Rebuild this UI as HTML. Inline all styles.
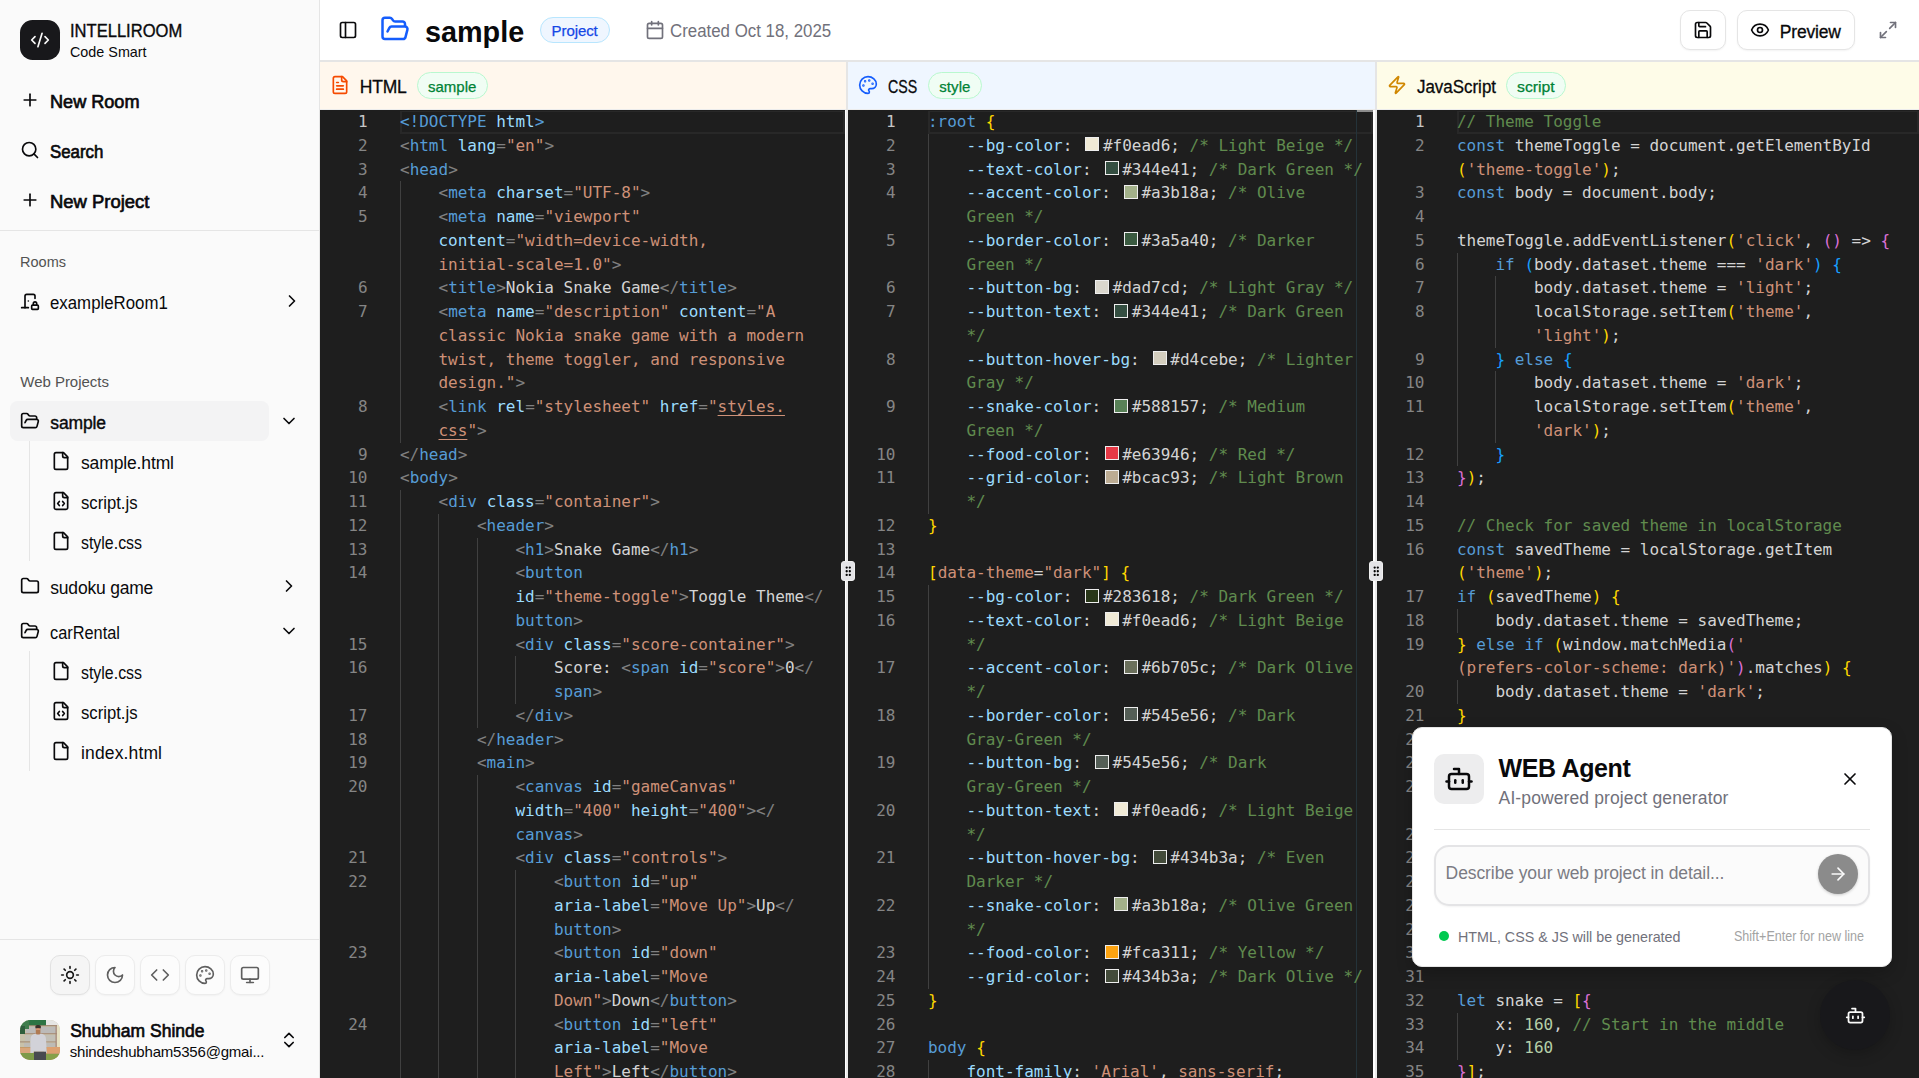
<!DOCTYPE html>
<html lang="en"><head><meta charset="utf-8"><title>sample - INTELLIROOM</title>
<style>
html,body{margin:0;padding:0}
body{width:1919px;height:1078px;overflow:hidden;background:#fff;position:relative;font-family:"Liberation Sans",sans-serif;color:#09090b}
.abs,.ic,.t{position:absolute}
.t{white-space:pre;line-height:1}
.ic{display:block;overflow:visible}
.ed{position:absolute;background:#1e1e1e;overflow:hidden;font-family:"DejaVu Sans Mono","Liberation Mono",monospace;font-size:16px;letter-spacing:-0.0112px;color:#d4d4d4}
.row{position:absolute;left:0;right:0;height:23.75px;line-height:23.75px;white-space:pre}
.ln{position:absolute;left:0;width:47.5px;text-align:right;color:#858585;top:0.12px}
.ln.a{color:#c6c6c6}
.tx{position:absolute;left:80px;top:0.12px}
.g{position:absolute;top:0;width:1px;height:23.75px;background:#404040}
.cl{position:absolute;box-sizing:border-box;border:2px solid #282828;border-top-width:1px}
.sw{display:inline-block;box-sizing:border-box;width:14px;height:14px;border:1.5px solid #eee;margin:1.75px 3.5px 0 3.5px;vertical-align:-0.5px}
.k{color:#569cd6}.d{color:#808080}.a{color:#9cdcfe}.s{color:#ce9178}.c{color:#608b4e}.n{color:#b5cea8}.b1{color:#ffd700}.b2{color:#da70d6}.b3{color:#179fff}
u{text-decoration:underline;text-underline-offset:3px}
.btn{position:absolute;box-sizing:border-box;border:1px solid #e5e5e5;border-radius:10px;background:#fff;box-shadow:0 1px 2px rgba(0,0,0,.05)}
.badge{position:absolute;box-sizing:border-box;border-radius:999px;border:1px solid}
</style></head><body>

<div class="abs" style="left:0;top:0;width:319px;height:1078px;background:#fafafa;border-right:1px solid #e5e5e5"></div>
<div class="abs" style="left:20px;top:20px;width:40px;height:40px;border-radius:12.5px;background:#18181b"></div>
<svg class="ic" style="left:30.00px;top:30.00px;width:20px;height:20px;color:#fafafa" viewBox="0 0 24 24" fill="none" stroke="currentColor" stroke-width="2" stroke-linecap="round" stroke-linejoin="round" ><path d="m18 16 4-4-4-4"/><path d="m6 8-4 4 4 4"/><path d="m14.5 4-5 16"/></svg>
<span class="t " id="t0" style="left:70.00px;top:23.00px;font-size:17.5px;color:#09090b;font-weight:400;letter-spacing:0.000px;-webkit-text-stroke:0.35px #09090b;transform:scaleX(0.9457);transform-origin:0 50%;">INTELLIROOM</span>
<span class="t " id="t1" style="left:70.00px;top:44.00px;font-size:15px;color:#09090b;font-weight:400;letter-spacing:0.000px;transform:scaleX(0.9569);transform-origin:0 50%;">Code Smart</span>
<svg class="ic" style="left:20.00px;top:90.00px;width:20px;height:20px;color:#09090b" viewBox="0 0 24 24" fill="none" stroke="currentColor" stroke-width="2" stroke-linecap="round" stroke-linejoin="round" ><path d="M5 12h14"/><path d="M12 5v14"/></svg>
<span class="t " id="t2" style="left:50.40px;top:94.00px;font-size:17.5px;color:#09090b;font-weight:400;letter-spacing:0.000px;-webkit-text-stroke:0.65px #09090b;transform:scaleX(1.0339);transform-origin:0 50%;">New Room</span>
<svg class="ic" style="left:20.00px;top:140.00px;width:20px;height:20px;color:#09090b" viewBox="0 0 24 24" fill="none" stroke="currentColor" stroke-width="2" stroke-linecap="round" stroke-linejoin="round" ><circle cx="11" cy="11" r="8"/><path d="m21 21-4.3-4.3"/></svg>
<span class="t " id="t3" style="left:50.40px;top:144.00px;font-size:17.5px;color:#09090b;font-weight:400;letter-spacing:0.000px;-webkit-text-stroke:0.65px #09090b;transform:scaleX(0.9630);transform-origin:0 50%;">Search</span>
<svg class="ic" style="left:20.00px;top:190.00px;width:20px;height:20px;color:#09090b" viewBox="0 0 24 24" fill="none" stroke="currentColor" stroke-width="2" stroke-linecap="round" stroke-linejoin="round" ><path d="M5 12h14"/><path d="M12 5v14"/></svg>
<span class="t " id="t4" style="left:50.40px;top:194.00px;font-size:17.5px;color:#09090b;font-weight:400;letter-spacing:0.000px;-webkit-text-stroke:0.65px #09090b;transform:scaleX(1.0525);transform-origin:0 50%;">New Project</span>
<div class="abs" style="left:0;top:230px;width:319px;height:1px;background:#e5e5e5"></div>
<span class="t " id="t5" style="left:20.00px;top:254.00px;font-size:15px;color:#525252;font-weight:400;letter-spacing:0.000px;transform:scaleX(0.9681);transform-origin:0 50%;">Rooms</span>
<svg class="ic" style="left:20.00px;top:291.00px;width:20px;height:20px;color:#09090b" viewBox="0 0 24 24" fill="none" stroke="currentColor" stroke-width="2" stroke-linecap="round" stroke-linejoin="round" ><path d="M10 12h.01"/><path d="M18 9V6a2 2 0 0 0-2-2H8a2 2 0 0 0-2 2v14"/><path d="M2 20h8"/><path d="M20 17v-2a2 2 0 1 0-4 0v2"/><rect x="14" y="17" width="8" height="5" rx="1"/></svg>
<span class="t " id="t6" style="left:50.20px;top:295.00px;font-size:17.5px;color:#09090b;font-weight:400;letter-spacing:0.000px;transform:scaleX(0.9611);transform-origin:0 50%;">exampleRoom1</span>
<svg class="ic" style="left:282.00px;top:291.00px;width:20px;height:20px;color:#09090b" viewBox="0 0 24 24" fill="none" stroke="currentColor" stroke-width="2" stroke-linecap="round" stroke-linejoin="round" ><path d="m9 18 6-6-6-6"/></svg>
<span class="t " id="t7" style="left:20.30px;top:374.00px;font-size:15px;color:#525252;font-weight:400;letter-spacing:-0.031px;">Web Projects</span>
<div class="abs" style="left:10px;top:401px;width:259px;height:40px;border-radius:7.5px;background:#f3f3f4"></div>
<svg class="ic" style="left:20.00px;top:411.00px;width:20px;height:20px;color:#09090b" viewBox="0 0 24 24" fill="none" stroke="currentColor" stroke-width="2" stroke-linecap="round" stroke-linejoin="round" ><path d="m6 14 1.5-2.9A2 2 0 0 1 9.24 10H20a2 2 0 0 1 1.94 2.5l-1.54 6a2 2 0 0 1-1.95 1.5H4a2 2 0 0 1-2-2V5a2 2 0 0 1 2-2h3.9a2 2 0 0 1 1.69.9l.81 1.2a2 2 0 0 0 1.67.9H18a2 2 0 0 1 2 2v2"/></svg>
<span class="t " id="t8" style="left:50.30px;top:415.00px;font-size:17.5px;color:#09090b;font-weight:400;letter-spacing:-0.144px;-webkit-text-stroke:0.4px #09090b;">sample</span>
<svg class="ic" style="left:279.00px;top:411.00px;width:20px;height:20px;color:#09090b" viewBox="0 0 24 24" fill="none" stroke="currentColor" stroke-width="2" stroke-linecap="round" stroke-linejoin="round" ><path d="m6 9 6 6 6-6"/></svg>
<div class="abs" style="left:29px;top:441px;width:1px;height:120px;background:#e5e5e5"></div>
<svg class="ic" style="left:51.00px;top:451.00px;width:20px;height:20px;color:#09090b" viewBox="0 0 24 24" fill="none" stroke="currentColor" stroke-width="2" stroke-linecap="round" stroke-linejoin="round" ><path d="M15 2H6a2 2 0 0 0-2 2v16a2 2 0 0 0 2 2h12a2 2 0 0 0 2-2V7Z"/><path d="M14 2v4a2 2 0 0 0 2 2h4"/></svg>
<span class="t " id="t9" style="left:81.00px;top:455.00px;font-size:17.5px;color:#09090b;font-weight:400;letter-spacing:-0.134px;">sample.html</span>
<svg class="ic" style="left:51.00px;top:491.00px;width:20px;height:20px;color:#09090b" viewBox="0 0 24 24" fill="none" stroke="currentColor" stroke-width="2" stroke-linecap="round" stroke-linejoin="round" ><path d="M10 12.5 8 15l2 2.5"/><path d="m14 12.5 2 2.5-2 2.5"/><path d="M14 2v4a2 2 0 0 0 2 2h4"/><path d="M15 2H6a2 2 0 0 0-2 2v16a2 2 0 0 0 2 2h12a2 2 0 0 0 2-2V7z"/></svg>
<span class="t " id="t10" style="left:81.00px;top:495.00px;font-size:17.5px;color:#09090b;font-weight:400;letter-spacing:0.000px;transform:scaleX(0.9526);transform-origin:0 50%;">script.js</span>
<svg class="ic" style="left:51.00px;top:531.00px;width:20px;height:20px;color:#09090b" viewBox="0 0 24 24" fill="none" stroke="currentColor" stroke-width="2" stroke-linecap="round" stroke-linejoin="round" ><path d="M15 2H6a2 2 0 0 0-2 2v16a2 2 0 0 0 2 2h12a2 2 0 0 0 2-2V7Z"/><path d="M14 2v4a2 2 0 0 0 2 2h4"/></svg>
<span class="t " id="t11" style="left:81.00px;top:535.00px;font-size:17.5px;color:#09090b;font-weight:400;letter-spacing:0.000px;transform:scaleX(0.9090);transform-origin:0 50%;">style.css</span>
<svg class="ic" style="left:20.00px;top:576.00px;width:20px;height:20px;color:#09090b" viewBox="0 0 24 24" fill="none" stroke="currentColor" stroke-width="2" stroke-linecap="round" stroke-linejoin="round" ><path d="M20 20a2 2 0 0 0 2-2V8a2 2 0 0 0-2-2h-7.9a2 2 0 0 1-1.69-.9L9.6 3.9A2 2 0 0 0 7.93 3H4a2 2 0 0 0-2 2v13a2 2 0 0 0 2 2Z"/></svg>
<span class="t " id="t12" style="left:50.30px;top:580.00px;font-size:17.5px;color:#09090b;font-weight:400;letter-spacing:-0.208px;">sudoku game</span>
<svg class="ic" style="left:279.00px;top:576.00px;width:20px;height:20px;color:#09090b" viewBox="0 0 24 24" fill="none" stroke="currentColor" stroke-width="2" stroke-linecap="round" stroke-linejoin="round" ><path d="m9 18 6-6-6-6"/></svg>
<svg class="ic" style="left:20.00px;top:621.00px;width:20px;height:20px;color:#09090b" viewBox="0 0 24 24" fill="none" stroke="currentColor" stroke-width="2" stroke-linecap="round" stroke-linejoin="round" ><path d="m6 14 1.5-2.9A2 2 0 0 1 9.24 10H20a2 2 0 0 1 1.94 2.5l-1.54 6a2 2 0 0 1-1.95 1.5H4a2 2 0 0 1-2-2V5a2 2 0 0 1 2-2h3.9a2 2 0 0 1 1.69.9l.81 1.2a2 2 0 0 0 1.67.9H18a2 2 0 0 1 2 2v2"/></svg>
<span class="t " id="t13" style="left:50.30px;top:625.00px;font-size:17.5px;color:#09090b;font-weight:400;letter-spacing:0.000px;transform:scaleX(0.9345);transform-origin:0 50%;">carRental</span>
<svg class="ic" style="left:279.00px;top:621.00px;width:20px;height:20px;color:#09090b" viewBox="0 0 24 24" fill="none" stroke="currentColor" stroke-width="2" stroke-linecap="round" stroke-linejoin="round" ><path d="m6 9 6 6 6-6"/></svg>
<div class="abs" style="left:29px;top:651px;width:1px;height:120px;background:#e5e5e5"></div>
<svg class="ic" style="left:51.00px;top:661.00px;width:20px;height:20px;color:#09090b" viewBox="0 0 24 24" fill="none" stroke="currentColor" stroke-width="2" stroke-linecap="round" stroke-linejoin="round" ><path d="M15 2H6a2 2 0 0 0-2 2v16a2 2 0 0 0 2 2h12a2 2 0 0 0 2-2V7Z"/><path d="M14 2v4a2 2 0 0 0 2 2h4"/></svg>
<span class="t " id="t14" style="left:81.00px;top:665.00px;font-size:17.5px;color:#09090b;font-weight:400;letter-spacing:0.000px;transform:scaleX(0.9090);transform-origin:0 50%;">style.css</span>
<svg class="ic" style="left:51.00px;top:701.00px;width:20px;height:20px;color:#09090b" viewBox="0 0 24 24" fill="none" stroke="currentColor" stroke-width="2" stroke-linecap="round" stroke-linejoin="round" ><path d="M10 12.5 8 15l2 2.5"/><path d="m14 12.5 2 2.5-2 2.5"/><path d="M14 2v4a2 2 0 0 0 2 2h4"/><path d="M15 2H6a2 2 0 0 0-2 2v16a2 2 0 0 0 2 2h12a2 2 0 0 0 2-2V7z"/></svg>
<span class="t " id="t15" style="left:81.00px;top:705.00px;font-size:17.5px;color:#09090b;font-weight:400;letter-spacing:0.000px;transform:scaleX(0.9526);transform-origin:0 50%;">script.js</span>
<svg class="ic" style="left:51.00px;top:741.00px;width:20px;height:20px;color:#09090b" viewBox="0 0 24 24" fill="none" stroke="currentColor" stroke-width="2" stroke-linecap="round" stroke-linejoin="round" ><path d="M15 2H6a2 2 0 0 0-2 2v16a2 2 0 0 0 2 2h12a2 2 0 0 0 2-2V7Z"/><path d="M14 2v4a2 2 0 0 0 2 2h4"/></svg>
<span class="t " id="t16" style="left:81.00px;top:745.00px;font-size:17.5px;color:#09090b;font-weight:400;letter-spacing:0.137px;">index.html</span>
<div class="abs" style="left:0;top:939px;width:319px;height:1px;background:#e5e5e5"></div>
<div class="abs" style="left:50px;top:955px;width:40px;height:40px;box-sizing:border-box;border:1px solid #e2e2e2;border-radius:10px;background:#f5f5f5;box-shadow:0 1px 2px rgba(0,0,0,.04)"></div>
<svg class="ic" style="left:60.00px;top:965.00px;width:20px;height:20px;color:#171717" viewBox="0 0 24 24" fill="none" stroke="currentColor" stroke-width="2" stroke-linecap="round" stroke-linejoin="round" ><circle cx="12" cy="12" r="4"/><path d="M12 2v2"/><path d="M12 20v2"/><path d="m4.93 4.93 1.41 1.41"/><path d="m17.66 17.66 1.41 1.41"/><path d="M2 12h2"/><path d="M20 12h2"/><path d="m6.34 17.66-1.41 1.41"/><path d="m19.07 4.93-1.41 1.41"/></svg>
<div class="abs" style="left:95px;top:955px;width:40px;height:40px;box-sizing:border-box;border:1px solid #ececec;border-radius:10px;background:#fcfcfc;box-shadow:0 1px 2px rgba(0,0,0,.04)"></div>
<svg class="ic" style="left:105.00px;top:965.00px;width:20px;height:20px;color:#5f5f5f" viewBox="0 0 24 24" fill="none" stroke="currentColor" stroke-width="2" stroke-linecap="round" stroke-linejoin="round" ><path d="M12 3a6 6 0 0 0 9 9 9 9 0 1 1-9-9Z"/></svg>
<div class="abs" style="left:140px;top:955px;width:40px;height:40px;box-sizing:border-box;border:1px solid #ececec;border-radius:10px;background:#fcfcfc;box-shadow:0 1px 2px rgba(0,0,0,.04)"></div>
<svg class="ic" style="left:150.00px;top:965.00px;width:20px;height:20px;color:#5f5f5f" viewBox="0 0 24 24" fill="none" stroke="currentColor" stroke-width="2" stroke-linecap="round" stroke-linejoin="round" ><polyline points="16 18 22 12 16 6"/><polyline points="8 6 2 12 8 18"/></svg>
<div class="abs" style="left:185px;top:955px;width:40px;height:40px;box-sizing:border-box;border:1px solid #ececec;border-radius:10px;background:#fcfcfc;box-shadow:0 1px 2px rgba(0,0,0,.04)"></div>
<svg class="ic" style="left:195.00px;top:965.00px;width:20px;height:20px;color:#5f5f5f" viewBox="0 0 24 24" fill="none" stroke="currentColor" stroke-width="2" stroke-linecap="round" stroke-linejoin="round" ><circle cx="13.5" cy="6.5" r=".5" fill="currentColor"/><circle cx="17.5" cy="10.5" r=".5" fill="currentColor"/><circle cx="8.5" cy="7.5" r=".5" fill="currentColor"/><circle cx="6.5" cy="12.5" r=".5" fill="currentColor"/><path d="M12 2C6.5 2 2 6.5 2 12s4.5 10 10 10c.926 0 1.648-.746 1.648-1.688 0-.437-.18-.835-.437-1.125-.29-.289-.438-.652-.438-1.125a1.64 1.64 0 0 1 1.668-1.668h1.996c3.051 0 5.555-2.503 5.555-5.554C21.965 6.012 17.461 2 12 2z"/></svg>
<div class="abs" style="left:230px;top:955px;width:40px;height:40px;box-sizing:border-box;border:1px solid #ececec;border-radius:10px;background:#fcfcfc;box-shadow:0 1px 2px rgba(0,0,0,.04)"></div>
<svg class="ic" style="left:240.00px;top:965.00px;width:20px;height:20px;color:#5f5f5f" viewBox="0 0 24 24" fill="none" stroke="currentColor" stroke-width="2" stroke-linecap="round" stroke-linejoin="round" ><rect width="20" height="14" x="2" y="3" rx="2"/><line x1="8" x2="16" y1="21" y2="21"/><line x1="12" x2="12" y1="17" y2="21"/></svg>
<svg class="ic" style="left:20px;top:1020px;width:40px;height:40px" viewBox="0 0 40 40"><defs><clipPath id="av"><rect width="40" height="40" rx="10"/></clipPath></defs><g clip-path="url(#av)"><rect width="40" height="40" fill="#c8c1aa"/><rect x="6" y="7" width="30" height="6" fill="#bcbab8"/><rect x="5" y="15" width="31" height="6" fill="#c2bfb6"/><rect x="4" y="23" width="32" height="4" fill="#bdbbb6"/><rect y="5.2" width="37" height="1" fill="#9c7f6c"/><rect x="4" y="13.2" width="33" height="1" fill="#a58876"/><rect y="21.4" width="10" height="1" fill="#a08672"/><rect x="26" y="21.4" width="10" height="1" fill="#a89080"/><rect x="35.5" y="5" width="1.2" height="24" fill="#a5877a"/><rect x="37" y="5" width="3" height="24" fill="#e6e0c2"/><rect x="26" y="0" width="14" height="5" fill="#e6e6e4"/><rect x="8" y="0" width="18" height="5.2" fill="#2d7444"/><rect x="0" y="0" width="9" height="9" fill="#3f7d4c"/><rect x="0" y="6" width="5" height="8" fill="#2f5e3c"/><rect x="0" y="27" width="40" height="13" fill="#c49a6a"/><rect x="0" y="28" width="13" height="5" fill="#d9a57a"/><rect x="27" y="27" width="13" height="6" fill="#dda070"/><rect x="0" y="33" width="14" height="7" fill="#7e9a48"/><rect x="26" y="34" width="14" height="6" fill="#86a04a"/><path d="M10.5 19c0-3 2-5 5-5.2h5.5c3 .2 5 2.200 5 5.200l.8 14h-2.800v-1.300h-10.500v1.300h-3.200z" fill="#d2d2d8"/><rect x="14" y="31.700" width="12" height="8.300" fill="#484a50"/><rect x="15.200" y="5" width="5.800" height="4" rx="2" fill="#3b302b"/><rect x="15.800" y="8" width="4.600" height="6.500" rx="1.500" fill="#b07a52"/><rect x="15.800" y="8.600" width="4.600" height="1.200" fill="#e09a80"/></g></svg>
<span class="t " id="t17" style="left:70.20px;top:1023.00px;font-size:17.5px;color:#09090b;font-weight:400;letter-spacing:0.009px;-webkit-text-stroke:0.65px #09090b;">Shubham Shinde</span>
<span class="t " id="t18" style="left:69.80px;top:1044.00px;font-size:15px;color:#09090b;font-weight:400;letter-spacing:-0.201px;">shindeshubham5356@gmai...</span>
<svg class="ic" style="left:278.80px;top:1030.00px;width:20px;height:20px;color:#09090b" viewBox="0 0 24 24" fill="none" stroke="currentColor" stroke-width="2" stroke-linecap="round" stroke-linejoin="round" ><path d="m7 15 5 5 5-5"/><path d="m7 9 5-5 5 5"/></svg>
<div class="abs" style="left:320px;top:60px;width:1599px;height:2px;background:#e5e5e5"></div>
<svg class="ic" style="left:338.20px;top:20.20px;width:20px;height:20px;color:#09090b" viewBox="0 0 24 24" fill="none" stroke="currentColor" stroke-width="2" stroke-linecap="round" stroke-linejoin="round" ><rect width="18" height="18" x="3" y="3" rx="2"/><path d="M9 3v18"/></svg>
<svg class="ic" style="left:379.90px;top:14.30px;width:30px;height:30px;color:#155dfc" viewBox="0 0 24 24" fill="none" stroke="currentColor" stroke-width="2" stroke-linecap="round" stroke-linejoin="round" ><path d="m6 14 1.5-2.9A2 2 0 0 1 9.24 10H20a2 2 0 0 1 1.94 2.5l-1.54 6a2 2 0 0 1-1.95 1.5H4a2 2 0 0 1-2-2V5a2 2 0 0 1 2-2h3.9a2 2 0 0 1 1.69.9l.81 1.2a2 2 0 0 0 1.67.9H18a2 2 0 0 1 2 2v2"/></svg>
<span class="t " id="t19" style="left:424.50px;top:17.00px;font-size:30px;color:#09090b;font-weight:700;letter-spacing:0.000px;transform:scaleX(0.9595);transform-origin:0 50%;">sample</span>
<div class="badge" style="left:540px;top:17px;width:70px;height:26px;background:#eff6ff;border-color:#b8e6fe"></div>
<span class="t " id="t20" style="left:551.60px;top:23.00px;font-size:15px;color:#1447e6;font-weight:400;letter-spacing:-0.081px;-webkit-text-stroke:0.25px #1447e6;">Project</span>
<svg class="ic" style="left:644.80px;top:20.10px;width:20px;height:20px;color:#71717b" viewBox="0 0 24 24" fill="none" stroke="currentColor" stroke-width="2" stroke-linecap="round" stroke-linejoin="round" ><path d="M8 2v4"/><path d="M16 2v4"/><rect width="18" height="18" x="3" y="4" rx="2"/><path d="M3 10h18"/></svg>
<span class="t " id="t21" style="left:669.60px;top:23.00px;font-size:17.5px;color:#71717b;font-weight:400;letter-spacing:0.000px;transform:scaleX(0.9634);transform-origin:0 50%;">Created Oct 18, 2025</span>
<div class="btn" style="left:1679.5px;top:10px;width:46px;height:40px"></div>
<svg class="ic" style="left:1693.00px;top:20.00px;width:20px;height:20px;color:#09090b" viewBox="0 0 24 24" fill="none" stroke="currentColor" stroke-width="2" stroke-linecap="round" stroke-linejoin="round" ><path d="M15.2 3a2 2 0 0 1 1.4.6l3.8 3.8a2 2 0 0 1 .6 1.4V19a2 2 0 0 1-2 2H5a2 2 0 0 1-2-2V5a2 2 0 0 1 2-2z"/><path d="M17 21v-7a1 1 0 0 0-1-1H8a1 1 0 0 0-1 1v7"/><path d="M7 3v4a1 1 0 0 0 1 1h7"/></svg>
<div class="btn" style="left:1736.5px;top:10px;width:118px;height:40px"></div>
<svg class="ic" style="left:1749.80px;top:20.00px;width:20px;height:20px;color:#09090b" viewBox="0 0 24 24" fill="none" stroke="currentColor" stroke-width="2" stroke-linecap="round" stroke-linejoin="round" ><path d="M2.062 12.348a1 1 0 0 1 0-.696 10.75 10.75 0 0 1 19.876 0 1 1 0 0 1 0 .696 10.75 10.75 0 0 1-19.876 0"/><circle cx="12" cy="12" r="3"/></svg>
<span class="t " id="t22" style="left:1779.80px;top:24.00px;font-size:17.5px;color:#09090b;font-weight:400;letter-spacing:-0.208px;-webkit-text-stroke:0.3px #09090b;">Preview</span>
<svg class="ic" style="left:1878.00px;top:20.00px;width:20px;height:20px;color:#71717b" viewBox="0 0 24 24" fill="none" stroke="currentColor" stroke-width="2" stroke-linecap="round" stroke-linejoin="round" ><polyline points="15 3 21 3 21 9"/><polyline points="9 21 3 21 3 15"/><line x1="21" x2="14" y1="3" y2="10"/><line x1="3" x2="10" y1="21" y2="14"/></svg>
<div class="abs" style="left:320px;top:62px;width:526px;height:47px;background:#fff7ed"></div>
<div class="abs" style="left:848px;top:62px;width:527px;height:47px;background:#eff6ff"></div>
<div class="abs" style="left:1377px;top:62px;width:542px;height:47px;background:#fefce8"></div>
<div class="abs" style="left:320px;top:109px;width:1599px;height:1px;background:#ececec"></div>
<svg class="ic" style="left:330.20px;top:75.00px;width:20px;height:20px;color:#f54a00" viewBox="0 0 24 24" fill="none" stroke="currentColor" stroke-width="2" stroke-linecap="round" stroke-linejoin="round" ><path d="M15 2H6a2 2 0 0 0-2 2v16a2 2 0 0 0 2 2h12a2 2 0 0 0 2-2V7Z"/><path d="M14 2v4a2 2 0 0 0 2 2h4"/><path d="M10 9H8"/><path d="M16 13H8"/><path d="M16 17H8"/></svg>
<span class="t " id="t23" style="left:359.80px;top:79.00px;font-size:17.5px;color:#09090b;font-weight:400;letter-spacing:-0.214px;-webkit-text-stroke:0.3px #09090b;">HTML</span>
<div class="badge" style="left:417px;top:72px;width:71px;height:27px;background:#f0fdf4;border-color:#b9f8cf"></div>
<span class="t " id="t24" style="left:428.00px;top:79.00px;font-size:15px;color:#008236;font-weight:400;letter-spacing:0.008px;-webkit-text-stroke:0.25px #008236;">sample</span>
<svg class="ic" style="left:858.00px;top:74.80px;width:20px;height:20px;color:#155dfc" viewBox="0 0 24 24" fill="none" stroke="currentColor" stroke-width="2" stroke-linecap="round" stroke-linejoin="round" ><circle cx="13.5" cy="6.5" r=".5" fill="currentColor"/><circle cx="17.5" cy="10.5" r=".5" fill="currentColor"/><circle cx="8.5" cy="7.5" r=".5" fill="currentColor"/><circle cx="6.5" cy="12.5" r=".5" fill="currentColor"/><path d="M12 2C6.5 2 2 6.5 2 12s4.5 10 10 10c.926 0 1.648-.746 1.648-1.688 0-.437-.18-.835-.437-1.125-.29-.289-.438-.652-.438-1.125a1.64 1.64 0 0 1 1.668-1.668h1.996c3.051 0 5.555-2.503 5.555-5.554C21.965 6.012 17.461 2 12 2z"/></svg>
<span class="t " id="t25" style="left:888.40px;top:79.00px;font-size:17.5px;color:#09090b;font-weight:400;letter-spacing:0.000px;-webkit-text-stroke:0.3px #09090b;transform:scaleX(0.8115);transform-origin:0 50%;">CSS</span>
<div class="badge" style="left:928px;top:72px;width:54px;height:27px;background:#f0fdf4;border-color:#b9f8cf"></div>
<span class="t " id="t26" style="left:939.20px;top:79.00px;font-size:15px;color:#008236;font-weight:400;letter-spacing:0.102px;-webkit-text-stroke:0.25px #008236;">style</span>
<svg class="ic" style="left:1387.00px;top:74.80px;width:20px;height:20px;color:#d08700" viewBox="0 0 24 24" fill="none" stroke="currentColor" stroke-width="2" stroke-linecap="round" stroke-linejoin="round" ><path d="M4 14a1 1 0 0 1-.78-1.63l9.9-10.2a.5.5 0 0 1 .86.46l-1.92 6.02A1 1 0 0 0 13 10h7a1 1 0 0 1 .78 1.63l-9.9 10.2a.5.5 0 0 1-.86-.46l1.92-6.02A1 1 0 0 0 11 14z"/></svg>
<span class="t " id="t27" style="left:1416.60px;top:79.00px;font-size:17.5px;color:#09090b;font-weight:400;letter-spacing:0.000px;-webkit-text-stroke:0.3px #09090b;transform:scaleX(0.9669);transform-origin:0 50%;">JavaScript</span>
<div class="badge" style="left:1506px;top:72px;width:60px;height:27px;background:#f0fdf4;border-color:#b9f8cf"></div>
<span class="t " id="t28" style="left:1516.80px;top:79.00px;font-size:15px;color:#008236;font-weight:400;letter-spacing:0.000px;-webkit-text-stroke:0.25px #008236;transform:scaleX(1.0532);transform-origin:0 50%;">script</span>
<div class="ed" style="left:320px;top:110px;width:524.8px;height:968px">
<div class="cl" style="left:80px;top:1px;width:444.8px;height:23px"></div>
<div class="row" style="top:0.00px"><span class="ln a">1</span><span class="tx"><span class="k">&lt;!DOCTYPE</span><span class="a"> html</span><span class="k">&gt;</span></span></div>
<div class="row" style="top:23.75px"><span class="ln">2</span><span class="tx"><span class="d">&lt;</span><span class="k">html</span> <span class="a">lang</span><span class="d">=</span><span class="s">"en"</span><span class="d">&gt;</span></span></div>
<div class="row" style="top:47.50px"><span class="ln">3</span><span class="tx"><span class="d">&lt;</span><span class="k">head</span><span class="d">&gt;</span></span></div>
<div class="row" style="top:71.25px"><span class="ln">4</span><i class="g" style="left:80.00px"></i><span class="tx">    <span class="d">&lt;</span><span class="k">meta</span> <span class="a">charset</span><span class="d">=</span><span class="s">"UTF-8"</span><span class="d">&gt;</span></span></div>
<div class="row" style="top:95.00px"><span class="ln">5</span><i class="g" style="left:80.00px"></i><span class="tx">    <span class="d">&lt;</span><span class="k">meta</span> <span class="a">name</span><span class="d">=</span><span class="s">"viewport"</span> </span></div>
<div class="row" style="top:118.75px"><i class="g" style="left:80.00px"></i><span class="tx">    <span class="a">content</span><span class="d">=</span><span class="s">"width=device-width, </span></span></div>
<div class="row" style="top:142.50px"><i class="g" style="left:80.00px"></i><span class="tx">    <span class="s">initial-scale=1.0"</span><span class="d">&gt;</span></span></div>
<div class="row" style="top:166.25px"><span class="ln">6</span><i class="g" style="left:80.00px"></i><span class="tx">    <span class="d">&lt;</span><span class="k">title</span><span class="d">&gt;</span>Nokia Snake Game<span class="d">&lt;/</span><span class="k">title</span><span class="d">&gt;</span></span></div>
<div class="row" style="top:190.00px"><span class="ln">7</span><i class="g" style="left:80.00px"></i><span class="tx">    <span class="d">&lt;</span><span class="k">meta</span> <span class="a">name</span><span class="d">=</span><span class="s">"description"</span> <span class="a">content</span><span class="d">=</span><span class="s">"A </span></span></div>
<div class="row" style="top:213.75px"><i class="g" style="left:80.00px"></i><span class="tx">    <span class="s">classic Nokia snake game with a modern </span></span></div>
<div class="row" style="top:237.50px"><i class="g" style="left:80.00px"></i><span class="tx">    <span class="s">twist, theme toggler, and responsive </span></span></div>
<div class="row" style="top:261.25px"><i class="g" style="left:80.00px"></i><span class="tx">    <span class="s">design."</span><span class="d">&gt;</span></span></div>
<div class="row" style="top:285.00px"><span class="ln">8</span><i class="g" style="left:80.00px"></i><span class="tx">    <span class="d">&lt;</span><span class="k">link</span> <span class="a">rel</span><span class="d">=</span><span class="s">"stylesheet"</span> <span class="a">href</span><span class="d">=</span><span class="s">"<u>styles.</u></span></span></div>
<div class="row" style="top:308.75px"><i class="g" style="left:80.00px"></i><span class="tx">    <span class="s"><u>css</u>"</span><span class="d">&gt;</span></span></div>
<div class="row" style="top:332.50px"><span class="ln">9</span><span class="tx"><span class="d">&lt;/</span><span class="k">head</span><span class="d">&gt;</span></span></div>
<div class="row" style="top:356.25px"><span class="ln">10</span><span class="tx"><span class="d">&lt;</span><span class="k">body</span><span class="d">&gt;</span></span></div>
<div class="row" style="top:380.00px"><span class="ln">11</span><i class="g" style="left:80.00px"></i><span class="tx">    <span class="d">&lt;</span><span class="k">div</span> <span class="a">class</span><span class="d">=</span><span class="s">"container"</span><span class="d">&gt;</span></span></div>
<div class="row" style="top:403.75px"><span class="ln">12</span><i class="g" style="left:80.00px"></i><i class="g" style="left:118.49px"></i><span class="tx">        <span class="d">&lt;</span><span class="k">header</span><span class="d">&gt;</span></span></div>
<div class="row" style="top:427.50px"><span class="ln">13</span><i class="g" style="left:80.00px"></i><i class="g" style="left:118.49px"></i><i class="g" style="left:156.97px"></i><span class="tx">            <span class="d">&lt;</span><span class="k">h1</span><span class="d">&gt;</span>Snake Game<span class="d">&lt;/</span><span class="k">h1</span><span class="d">&gt;</span></span></div>
<div class="row" style="top:451.25px"><span class="ln">14</span><i class="g" style="left:80.00px"></i><i class="g" style="left:118.49px"></i><i class="g" style="left:156.97px"></i><span class="tx">            <span class="d">&lt;</span><span class="k">button</span> </span></div>
<div class="row" style="top:475.00px"><i class="g" style="left:80.00px"></i><i class="g" style="left:118.49px"></i><i class="g" style="left:156.97px"></i><span class="tx">            <span class="a">id</span><span class="d">=</span><span class="s">"theme-toggle"</span><span class="d">&gt;</span>Toggle Theme<span class="d">&lt;/</span></span></div>
<div class="row" style="top:498.75px"><i class="g" style="left:80.00px"></i><i class="g" style="left:118.49px"></i><i class="g" style="left:156.97px"></i><span class="tx">            <span class="k">button</span><span class="d">&gt;</span></span></div>
<div class="row" style="top:522.50px"><span class="ln">15</span><i class="g" style="left:80.00px"></i><i class="g" style="left:118.49px"></i><i class="g" style="left:156.97px"></i><span class="tx">            <span class="d">&lt;</span><span class="k">div</span> <span class="a">class</span><span class="d">=</span><span class="s">"score-container"</span><span class="d">&gt;</span></span></div>
<div class="row" style="top:546.25px"><span class="ln">16</span><i class="g" style="left:80.00px"></i><i class="g" style="left:118.49px"></i><i class="g" style="left:156.97px"></i><i class="g" style="left:195.46px"></i><span class="tx">                Score: <span class="d">&lt;</span><span class="k">span</span> <span class="a">id</span><span class="d">=</span><span class="s">"score"</span><span class="d">&gt;</span>0<span class="d">&lt;/</span></span></div>
<div class="row" style="top:570.00px"><i class="g" style="left:80.00px"></i><i class="g" style="left:118.49px"></i><i class="g" style="left:156.97px"></i><i class="g" style="left:195.46px"></i><span class="tx">                <span class="k">span</span><span class="d">&gt;</span></span></div>
<div class="row" style="top:593.75px"><span class="ln">17</span><i class="g" style="left:80.00px"></i><i class="g" style="left:118.49px"></i><i class="g" style="left:156.97px"></i><span class="tx">            <span class="d">&lt;/</span><span class="k">div</span><span class="d">&gt;</span></span></div>
<div class="row" style="top:617.50px"><span class="ln">18</span><i class="g" style="left:80.00px"></i><i class="g" style="left:118.49px"></i><span class="tx">        <span class="d">&lt;/</span><span class="k">header</span><span class="d">&gt;</span></span></div>
<div class="row" style="top:641.25px"><span class="ln">19</span><i class="g" style="left:80.00px"></i><i class="g" style="left:118.49px"></i><span class="tx">        <span class="d">&lt;</span><span class="k">main</span><span class="d">&gt;</span></span></div>
<div class="row" style="top:665.00px"><span class="ln">20</span><i class="g" style="left:80.00px"></i><i class="g" style="left:118.49px"></i><i class="g" style="left:156.97px"></i><span class="tx">            <span class="d">&lt;</span><span class="k">canvas</span> <span class="a">id</span><span class="d">=</span><span class="s">"gameCanvas"</span> </span></div>
<div class="row" style="top:688.75px"><i class="g" style="left:80.00px"></i><i class="g" style="left:118.49px"></i><i class="g" style="left:156.97px"></i><span class="tx">            <span class="a">width</span><span class="d">=</span><span class="s">"400"</span> <span class="a">height</span><span class="d">=</span><span class="s">"400"</span><span class="d">&gt;&lt;/</span></span></div>
<div class="row" style="top:712.50px"><i class="g" style="left:80.00px"></i><i class="g" style="left:118.49px"></i><i class="g" style="left:156.97px"></i><span class="tx">            <span class="k">canvas</span><span class="d">&gt;</span></span></div>
<div class="row" style="top:736.25px"><span class="ln">21</span><i class="g" style="left:80.00px"></i><i class="g" style="left:118.49px"></i><i class="g" style="left:156.97px"></i><span class="tx">            <span class="d">&lt;</span><span class="k">div</span> <span class="a">class</span><span class="d">=</span><span class="s">"controls"</span><span class="d">&gt;</span></span></div>
<div class="row" style="top:760.00px"><span class="ln">22</span><i class="g" style="left:80.00px"></i><i class="g" style="left:118.49px"></i><i class="g" style="left:156.97px"></i><i class="g" style="left:195.46px"></i><span class="tx">                <span class="d">&lt;</span><span class="k">button</span> <span class="a">id</span><span class="d">=</span><span class="s">"up"</span> </span></div>
<div class="row" style="top:783.75px"><i class="g" style="left:80.00px"></i><i class="g" style="left:118.49px"></i><i class="g" style="left:156.97px"></i><i class="g" style="left:195.46px"></i><span class="tx">                <span class="a">aria-label</span><span class="d">=</span><span class="s">"Move Up"</span><span class="d">&gt;</span>Up<span class="d">&lt;/</span></span></div>
<div class="row" style="top:807.50px"><i class="g" style="left:80.00px"></i><i class="g" style="left:118.49px"></i><i class="g" style="left:156.97px"></i><i class="g" style="left:195.46px"></i><span class="tx">                <span class="k">button</span><span class="d">&gt;</span></span></div>
<div class="row" style="top:831.25px"><span class="ln">23</span><i class="g" style="left:80.00px"></i><i class="g" style="left:118.49px"></i><i class="g" style="left:156.97px"></i><i class="g" style="left:195.46px"></i><span class="tx">                <span class="d">&lt;</span><span class="k">button</span> <span class="a">id</span><span class="d">=</span><span class="s">"down"</span> </span></div>
<div class="row" style="top:855.00px"><i class="g" style="left:80.00px"></i><i class="g" style="left:118.49px"></i><i class="g" style="left:156.97px"></i><i class="g" style="left:195.46px"></i><span class="tx">                <span class="a">aria-label</span><span class="d">=</span><span class="s">"Move </span></span></div>
<div class="row" style="top:878.75px"><i class="g" style="left:80.00px"></i><i class="g" style="left:118.49px"></i><i class="g" style="left:156.97px"></i><i class="g" style="left:195.46px"></i><span class="tx">                <span class="s">Down"</span><span class="d">&gt;</span>Down<span class="d">&lt;/</span><span class="k">button</span><span class="d">&gt;</span></span></div>
<div class="row" style="top:902.50px"><span class="ln">24</span><i class="g" style="left:80.00px"></i><i class="g" style="left:118.49px"></i><i class="g" style="left:156.97px"></i><i class="g" style="left:195.46px"></i><span class="tx">                <span class="d">&lt;</span><span class="k">button</span> <span class="a">id</span><span class="d">=</span><span class="s">"left"</span> </span></div>
<div class="row" style="top:926.25px"><i class="g" style="left:80.00px"></i><i class="g" style="left:118.49px"></i><i class="g" style="left:156.97px"></i><i class="g" style="left:195.46px"></i><span class="tx">                <span class="a">aria-label</span><span class="d">=</span><span class="s">"Move </span></span></div>
<div class="row" style="top:950.00px"><i class="g" style="left:80.00px"></i><i class="g" style="left:118.49px"></i><i class="g" style="left:156.97px"></i><i class="g" style="left:195.46px"></i><span class="tx">                <span class="s">Left"</span><span class="d">&gt;</span>Left<span class="d">&lt;/</span><span class="k">button</span><span class="d">&gt;</span></span></div>
</div>
<div class="ed" style="left:848px;top:110px;width:524.7px;height:968px">
<div class="cl" style="left:80px;top:1px;width:444.7px;height:23px"></div>
<div style="position:absolute;left:508.2px;top:0;width:1px;height:100%;background:#24333a"></div>
<div style="position:absolute;left:509.0px;top:0;width:15.7px;height:2px;background:#8c8c8c"></div>
<div class="row" style="top:0.00px"><span class="ln a">1</span><span class="tx"><span class="k">:root</span> <span class="b1">{</span></span></div>
<div class="row" style="top:23.75px"><span class="ln">2</span><i class="g" style="left:80.00px"></i><span class="tx">    <span class="a">--bg-color</span>: <b class="sw" style="background:#f0ead6"></b>#f0ead6; <span class="c">/* Light Beige */</span></span></div>
<div class="row" style="top:47.50px"><span class="ln">3</span><i class="g" style="left:80.00px"></i><span class="tx">    <span class="a">--text-color</span>: <b class="sw" style="background:#344e41"></b>#344e41; <span class="c">/* Dark Green */</span></span></div>
<div class="row" style="top:71.25px"><span class="ln">4</span><i class="g" style="left:80.00px"></i><span class="tx">    <span class="a">--accent-color</span>: <b class="sw" style="background:#a3b18a"></b>#a3b18a; <span class="c">/* Olive </span></span></div>
<div class="row" style="top:95.00px"><i class="g" style="left:80.00px"></i><span class="tx">    <span class="c">Green */</span></span></div>
<div class="row" style="top:118.75px"><span class="ln">5</span><i class="g" style="left:80.00px"></i><span class="tx">    <span class="a">--border-color</span>: <b class="sw" style="background:#3a5a40"></b>#3a5a40; <span class="c">/* Darker </span></span></div>
<div class="row" style="top:142.50px"><i class="g" style="left:80.00px"></i><span class="tx">    <span class="c">Green */</span></span></div>
<div class="row" style="top:166.25px"><span class="ln">6</span><i class="g" style="left:80.00px"></i><span class="tx">    <span class="a">--button-bg</span>: <b class="sw" style="background:#dad7cd"></b>#dad7cd; <span class="c">/* Light Gray */</span></span></div>
<div class="row" style="top:190.00px"><span class="ln">7</span><i class="g" style="left:80.00px"></i><span class="tx">    <span class="a">--button-text</span>: <b class="sw" style="background:#344e41"></b>#344e41; <span class="c">/* Dark Green </span></span></div>
<div class="row" style="top:213.75px"><i class="g" style="left:80.00px"></i><span class="tx">    <span class="c">*/</span></span></div>
<div class="row" style="top:237.50px"><span class="ln">8</span><i class="g" style="left:80.00px"></i><span class="tx">    <span class="a">--button-hover-bg</span>: <b class="sw" style="background:#d4cebe"></b>#d4cebe; <span class="c">/* Lighter </span></span></div>
<div class="row" style="top:261.25px"><i class="g" style="left:80.00px"></i><span class="tx">    <span class="c">Gray */</span></span></div>
<div class="row" style="top:285.00px"><span class="ln">9</span><i class="g" style="left:80.00px"></i><span class="tx">    <span class="a">--snake-color</span>: <b class="sw" style="background:#588157"></b>#588157; <span class="c">/* Medium </span></span></div>
<div class="row" style="top:308.75px"><i class="g" style="left:80.00px"></i><span class="tx">    <span class="c">Green */</span></span></div>
<div class="row" style="top:332.50px"><span class="ln">10</span><i class="g" style="left:80.00px"></i><span class="tx">    <span class="a">--food-color</span>: <b class="sw" style="background:#e63946"></b>#e63946; <span class="c">/* Red */</span></span></div>
<div class="row" style="top:356.25px"><span class="ln">11</span><i class="g" style="left:80.00px"></i><span class="tx">    <span class="a">--grid-color</span>: <b class="sw" style="background:#bcac93"></b>#bcac93; <span class="c">/* Light Brown </span></span></div>
<div class="row" style="top:380.00px"><i class="g" style="left:80.00px"></i><span class="tx">    <span class="c">*/</span></span></div>
<div class="row" style="top:403.75px"><span class="ln">12</span><span class="tx"><span class="b1">}</span></span></div>
<div class="row" style="top:427.50px"><span class="ln">13</span><span class="tx"></span></div>
<div class="row" style="top:451.25px"><span class="ln">14</span><span class="tx"><span class="b1">[</span><span class="s">data-theme</span>=<span class="s">"dark"</span><span class="b1">]</span> <span class="b1">{</span></span></div>
<div class="row" style="top:475.00px"><span class="ln">15</span><i class="g" style="left:80.00px"></i><span class="tx">    <span class="a">--bg-color</span>: <b class="sw" style="background:#283618"></b>#283618; <span class="c">/* Dark Green */</span></span></div>
<div class="row" style="top:498.75px"><span class="ln">16</span><i class="g" style="left:80.00px"></i><span class="tx">    <span class="a">--text-color</span>: <b class="sw" style="background:#f0ead6"></b>#f0ead6; <span class="c">/* Light Beige </span></span></div>
<div class="row" style="top:522.50px"><i class="g" style="left:80.00px"></i><span class="tx">    <span class="c">*/</span></span></div>
<div class="row" style="top:546.25px"><span class="ln">17</span><i class="g" style="left:80.00px"></i><span class="tx">    <span class="a">--accent-color</span>: <b class="sw" style="background:#6b705c"></b>#6b705c; <span class="c">/* Dark Olive </span></span></div>
<div class="row" style="top:570.00px"><i class="g" style="left:80.00px"></i><span class="tx">    <span class="c">*/</span></span></div>
<div class="row" style="top:593.75px"><span class="ln">18</span><i class="g" style="left:80.00px"></i><span class="tx">    <span class="a">--border-color</span>: <b class="sw" style="background:#545e56"></b>#545e56; <span class="c">/* Dark </span></span></div>
<div class="row" style="top:617.50px"><i class="g" style="left:80.00px"></i><span class="tx">    <span class="c">Gray-Green */</span></span></div>
<div class="row" style="top:641.25px"><span class="ln">19</span><i class="g" style="left:80.00px"></i><span class="tx">    <span class="a">--button-bg</span>: <b class="sw" style="background:#545e56"></b>#545e56; <span class="c">/* Dark </span></span></div>
<div class="row" style="top:665.00px"><i class="g" style="left:80.00px"></i><span class="tx">    <span class="c">Gray-Green */</span></span></div>
<div class="row" style="top:688.75px"><span class="ln">20</span><i class="g" style="left:80.00px"></i><span class="tx">    <span class="a">--button-text</span>: <b class="sw" style="background:#f0ead6"></b>#f0ead6; <span class="c">/* Light Beige </span></span></div>
<div class="row" style="top:712.50px"><i class="g" style="left:80.00px"></i><span class="tx">    <span class="c">*/</span></span></div>
<div class="row" style="top:736.25px"><span class="ln">21</span><i class="g" style="left:80.00px"></i><span class="tx">    <span class="a">--button-hover-bg</span>: <b class="sw" style="background:#434b3a"></b>#434b3a; <span class="c">/* Even </span></span></div>
<div class="row" style="top:760.00px"><i class="g" style="left:80.00px"></i><span class="tx">    <span class="c">Darker */</span></span></div>
<div class="row" style="top:783.75px"><span class="ln">22</span><i class="g" style="left:80.00px"></i><span class="tx">    <span class="a">--snake-color</span>: <b class="sw" style="background:#a3b18a"></b>#a3b18a; <span class="c">/* Olive Green </span></span></div>
<div class="row" style="top:807.50px"><i class="g" style="left:80.00px"></i><span class="tx">    <span class="c">*/</span></span></div>
<div class="row" style="top:831.25px"><span class="ln">23</span><i class="g" style="left:80.00px"></i><span class="tx">    <span class="a">--food-color</span>: <b class="sw" style="background:#fca311"></b>#fca311; <span class="c">/* Yellow */</span></span></div>
<div class="row" style="top:855.00px"><span class="ln">24</span><i class="g" style="left:80.00px"></i><span class="tx">    <span class="a">--grid-color</span>: <b class="sw" style="background:#434b3a"></b>#434b3a; <span class="c">/* Dark Olive */</span></span></div>
<div class="row" style="top:878.75px"><span class="ln">25</span><span class="tx"><span class="b1">}</span></span></div>
<div class="row" style="top:902.50px"><span class="ln">26</span><span class="tx"></span></div>
<div class="row" style="top:926.25px"><span class="ln">27</span><span class="tx"><span class="k">body</span> <span class="b1">{</span></span></div>
<div class="row" style="top:950.00px"><span class="ln">28</span><i class="g" style="left:80.00px"></i><span class="tx">    <span class="a">font-family</span>: <span class="s">'Arial'</span>, <span class="s">sans-serif</span>;</span></div>
</div>
<div class="ed" style="left:1377px;top:110px;width:542px;height:968px">
<div class="cl" style="left:80px;top:1px;width:462.0px;height:23px"></div>
<div class="row" style="top:0.00px"><span class="ln a">1</span><span class="tx"><span class="c">// Theme Toggle</span></span></div>
<div class="row" style="top:23.75px"><span class="ln">2</span><span class="tx"><span class="k">const</span> themeToggle = document.getElementById</span></div>
<div class="row" style="top:47.50px"><span class="tx"><span class="b1">(</span><span class="s">'theme-toggle'</span><span class="b1">)</span>;</span></div>
<div class="row" style="top:71.25px"><span class="ln">3</span><span class="tx"><span class="k">const</span> body = document.body;</span></div>
<div class="row" style="top:95.00px"><span class="ln">4</span><span class="tx"></span></div>
<div class="row" style="top:118.75px"><span class="ln">5</span><span class="tx">themeToggle.addEventListener<span class="b1">(</span><span class="s">'click'</span>, <span class="b2">()</span> =&gt; <span class="b2">{</span></span></div>
<div class="row" style="top:142.50px"><span class="ln">6</span><i class="g" style="left:80.00px"></i><span class="tx">    <span class="k">if</span> <span class="b3">(</span>body.dataset.theme === <span class="s">'dark'</span><span class="b3">)</span> <span class="b3">{</span></span></div>
<div class="row" style="top:166.25px"><span class="ln">7</span><i class="g" style="left:80.00px"></i><i class="g" style="left:118.49px"></i><span class="tx">        body.dataset.theme = <span class="s">'light'</span>;</span></div>
<div class="row" style="top:190.00px"><span class="ln">8</span><i class="g" style="left:80.00px"></i><i class="g" style="left:118.49px"></i><span class="tx">        localStorage.setItem<span class="b1">(</span><span class="s">'theme'</span>, </span></div>
<div class="row" style="top:213.75px"><i class="g" style="left:80.00px"></i><i class="g" style="left:118.49px"></i><span class="tx">        <span class="s">'light'</span><span class="b1">)</span>;</span></div>
<div class="row" style="top:237.50px"><span class="ln">9</span><i class="g" style="left:80.00px"></i><span class="tx">    <span class="b3">}</span> <span class="k">else</span> <span class="b3">{</span></span></div>
<div class="row" style="top:261.25px"><span class="ln">10</span><i class="g" style="left:80.00px"></i><i class="g" style="left:118.49px"></i><span class="tx">        body.dataset.theme = <span class="s">'dark'</span>;</span></div>
<div class="row" style="top:285.00px"><span class="ln">11</span><i class="g" style="left:80.00px"></i><i class="g" style="left:118.49px"></i><span class="tx">        localStorage.setItem<span class="b1">(</span><span class="s">'theme'</span>, </span></div>
<div class="row" style="top:308.75px"><i class="g" style="left:80.00px"></i><i class="g" style="left:118.49px"></i><span class="tx">        <span class="s">'dark'</span><span class="b1">)</span>;</span></div>
<div class="row" style="top:332.50px"><span class="ln">12</span><i class="g" style="left:80.00px"></i><span class="tx">    <span class="b3">}</span></span></div>
<div class="row" style="top:356.25px"><span class="ln">13</span><span class="tx"><span class="b2">}</span><span class="b1">)</span>;</span></div>
<div class="row" style="top:380.00px"><span class="ln">14</span><span class="tx"></span></div>
<div class="row" style="top:403.75px"><span class="ln">15</span><span class="tx"><span class="c">// Check for saved theme in localStorage</span></span></div>
<div class="row" style="top:427.50px"><span class="ln">16</span><span class="tx"><span class="k">const</span> savedTheme = localStorage.getItem</span></div>
<div class="row" style="top:451.25px"><span class="tx"><span class="b1">(</span><span class="s">'theme'</span><span class="b1">)</span>;</span></div>
<div class="row" style="top:475.00px"><span class="ln">17</span><span class="tx"><span class="k">if</span> <span class="b1">(</span>savedTheme<span class="b1">)</span> <span class="b1">{</span></span></div>
<div class="row" style="top:498.75px"><span class="ln">18</span><i class="g" style="left:80.00px"></i><span class="tx">    body.dataset.theme = savedTheme;</span></div>
<div class="row" style="top:522.50px"><span class="ln">19</span><span class="tx"><span class="b1">}</span> <span class="k">else</span> <span class="k">if</span> <span class="b1">(</span>window.matchMedia<span class="b2">(</span><span class="s">'</span></span></div>
<div class="row" style="top:546.25px"><span class="tx"><span class="s">(prefers-color-scheme: dark)'</span><span class="b2">)</span>.matches<span class="b1">)</span> <span class="b1">{</span></span></div>
<div class="row" style="top:570.00px"><span class="ln">20</span><i class="g" style="left:80.00px"></i><span class="tx">    body.dataset.theme = <span class="s">'dark'</span>;</span></div>
<div class="row" style="top:593.75px"><span class="ln">21</span><span class="tx"><span class="b1">}</span></span></div>
<div class="row" style="top:617.50px"><span class="ln">22</span><span class="tx"></span></div>
<div class="row" style="top:641.25px"><span class="ln">23</span><span class="tx"><span class="c">// Game Logic</span></span></div>
<div class="row" style="top:665.00px"><span class="ln">24</span><span class="tx"><span class="k">const</span> canvas = document.getElementById</span></div>
<div class="row" style="top:688.75px"><span class="tx"><span class="b1">(</span><span class="s">'gameCanvas'</span><span class="b1">)</span>;</span></div>
<div class="row" style="top:712.50px"><span class="ln">25</span><span class="tx"><span class="k">const</span> ctx = canvas.getContext<span class="b1">(</span><span class="s">'2d'</span><span class="b1">)</span>;</span></div>
<div class="row" style="top:736.25px"><span class="ln">26</span><span class="tx"><span class="k">const</span> scoreElement = score;</span></div>
<div class="row" style="top:760.00px"><span class="ln">27</span><span class="tx"></span></div>
<div class="row" style="top:783.75px"><span class="ln">28</span><span class="tx"><span class="k">const</span> gridSize = <span class="n">20</span>;</span></div>
<div class="row" style="top:807.50px"><span class="ln">29</span><span class="tx"><span class="k">const</span> tileCount = <span class="n">20</span>;</span></div>
<div class="row" style="top:831.25px"><span class="ln">30</span><span class="tx"><span class="k">let</span> score = <span class="n">0</span>;</span></div>
<div class="row" style="top:855.00px"><span class="ln">31</span><span class="tx"></span></div>
<div class="row" style="top:878.75px"><span class="ln">32</span><span class="tx"><span class="k">let</span> snake = <span class="b1">[</span><span class="b2">{</span></span></div>
<div class="row" style="top:902.50px"><span class="ln">33</span><i class="g" style="left:80.00px"></i><span class="tx">    x: <span class="n">160</span>, <span class="c">// Start in the middle</span></span></div>
<div class="row" style="top:926.25px"><span class="ln">34</span><i class="g" style="left:80.00px"></i><span class="tx">    y: <span class="n">160</span></span></div>
<div class="row" style="top:950.00px"><span class="ln">35</span><span class="tx"><span class="b2">}</span><span class="b1">]</span>;</span></div>
</div>
<div class="abs" style="left:846px;top:62px;width:2px;height:1016px;background:#e5e5e5"></div>
<div class="abs" style="left:846px;top:110px;width:2px;height:968px;background:#ebebeb"></div>
<div class="abs" style="left:841px;top:561px;width:14px;height:20px;box-sizing:border-box;border:1px solid #efefef;border-radius:3px;background:#e4e4e7"></div>
<svg class="ic" style="left:841.75px;top:564.75px;width:12.5px;height:12.5px;color:#000" viewBox="0 0 24 24" fill="none" stroke="currentColor" stroke-width="2.4" stroke-linecap="round" stroke-linejoin="round" ><circle cx="9" cy="12" r="1"/><circle cx="9" cy="5" r="1"/><circle cx="9" cy="19" r="1"/><circle cx="15" cy="12" r="1"/><circle cx="15" cy="5" r="1"/><circle cx="15" cy="19" r="1"/></svg>
<div class="abs" style="left:1375px;top:62px;width:2px;height:1016px;background:#e5e5e5"></div>
<div class="abs" style="left:1375px;top:110px;width:2px;height:968px;background:#ebebeb"></div>
<div class="abs" style="left:1369px;top:561px;width:14px;height:20px;box-sizing:border-box;border:1px solid #efefef;border-radius:3px;background:#e4e4e7"></div>
<svg class="ic" style="left:1369.75px;top:564.75px;width:12.5px;height:12.5px;color:#000" viewBox="0 0 24 24" fill="none" stroke="currentColor" stroke-width="2.4" stroke-linecap="round" stroke-linejoin="round" ><circle cx="9" cy="12" r="1"/><circle cx="9" cy="5" r="1"/><circle cx="9" cy="19" r="1"/><circle cx="15" cy="12" r="1"/><circle cx="15" cy="5" r="1"/><circle cx="15" cy="19" r="1"/></svg>
<div class="abs" style="left:1412px;top:727px;width:480px;height:240px;box-sizing:border-box;border-radius:10px;background:#fff;border:1px solid #e5e5e5;box-shadow:0 6px 16px rgba(0,0,0,.22)"></div>
<div class="abs" style="left:1434px;top:754px;width:50px;height:50px;border-radius:10px;background:#ededee"></div>
<svg class="ic" style="left:1444.00px;top:764.00px;width:30px;height:30px;color:#09090b" viewBox="0 0 24 24" fill="none" stroke="currentColor" stroke-width="2" stroke-linecap="round" stroke-linejoin="round" ><path d="M12 8V4H8"/><rect width="16" height="12" x="4" y="8" rx="2"/><path d="M2 14h2"/><path d="M20 14h2"/><path d="M15 13v2"/><path d="M9 13v2"/></svg>
<span class="t " id="t29" style="left:1498.60px;top:756.00px;font-size:25px;color:#09090b;font-weight:700;letter-spacing:-0.371px;">WEB Agent</span>
<span class="t " id="t30" style="left:1498.60px;top:790.00px;font-size:17.5px;color:#71717b;font-weight:400;letter-spacing:0.113px;">AI-powered project generator</span>
<svg class="ic" style="left:1840.00px;top:769.00px;width:20px;height:20px;color:#09090b" viewBox="0 0 24 24" fill="none" stroke="currentColor" stroke-width="2" stroke-linecap="round" stroke-linejoin="round" ><path d="M18 6 6 18"/><path d="m6 6 12 12"/></svg>
<div class="abs" style="left:1434px;top:829px;width:436px;height:1px;background:#e5e5e5"></div>
<div class="abs" style="left:1434px;top:845px;width:436px;height:61px;box-sizing:border-box;border:2px solid #e4e4e6;border-radius:15px;background:#fbfbfb;box-shadow:0 1px 2px rgba(0,0,0,.05)"></div>
<span class="t " id="t31" style="left:1445.60px;top:865.00px;font-size:17.5px;color:#7b7b83;font-weight:400;letter-spacing:-0.090px;">Describe your web project in detail...</span>
<div class="abs" style="left:1818px;top:854px;width:40px;height:40px;border-radius:50%;background:#8b8b8b;box-shadow:0 1px 3px rgba(0,0,0,.2)"></div>
<svg class="ic" style="left:1828.00px;top:864.00px;width:20px;height:20px;color:#fafafa" viewBox="0 0 24 24" fill="none" stroke="currentColor" stroke-width="2" stroke-linecap="round" stroke-linejoin="round" ><path d="M5 12h14"/><path d="m12 5 7 7-7 7"/></svg>
<div class="abs" style="left:1439px;top:931px;width:10px;height:10px;border-radius:50%;background:#00c950"></div>
<span class="t " id="t32" style="left:1458.20px;top:929.00px;font-size:15px;color:#71717b;font-weight:400;letter-spacing:0.000px;transform:scaleX(0.9531);transform-origin:0 50%;">HTML, CSS &amp; JS will be generated</span>
<span class="t " id="t33" style="left:1734.30px;top:930.00px;font-size:13.75px;color:#a3a3a3;font-weight:400;letter-spacing:0.000px;transform:scaleX(0.9120);transform-origin:0 50%;">Shift+Enter for new line</span>
<div class="abs" style="left:1820px;top:980px;width:70px;height:70px;border-radius:50%;background:#18181b;box-shadow:0 4px 14px rgba(0,0,0,.22)"></div>
<svg class="ic" style="left:1844.70px;top:1004.50px;width:21px;height:21px;color:#fafafa" viewBox="0 0 24 24" fill="none" stroke="currentColor" stroke-width="2" stroke-linecap="round" stroke-linejoin="round" ><path d="M12 8V4H8"/><rect width="16" height="12" x="4" y="8" rx="2"/><path d="M2 14h2"/><path d="M20 14h2"/><path d="M15 13v2"/><path d="M9 13v2"/></svg>
</body></html>
